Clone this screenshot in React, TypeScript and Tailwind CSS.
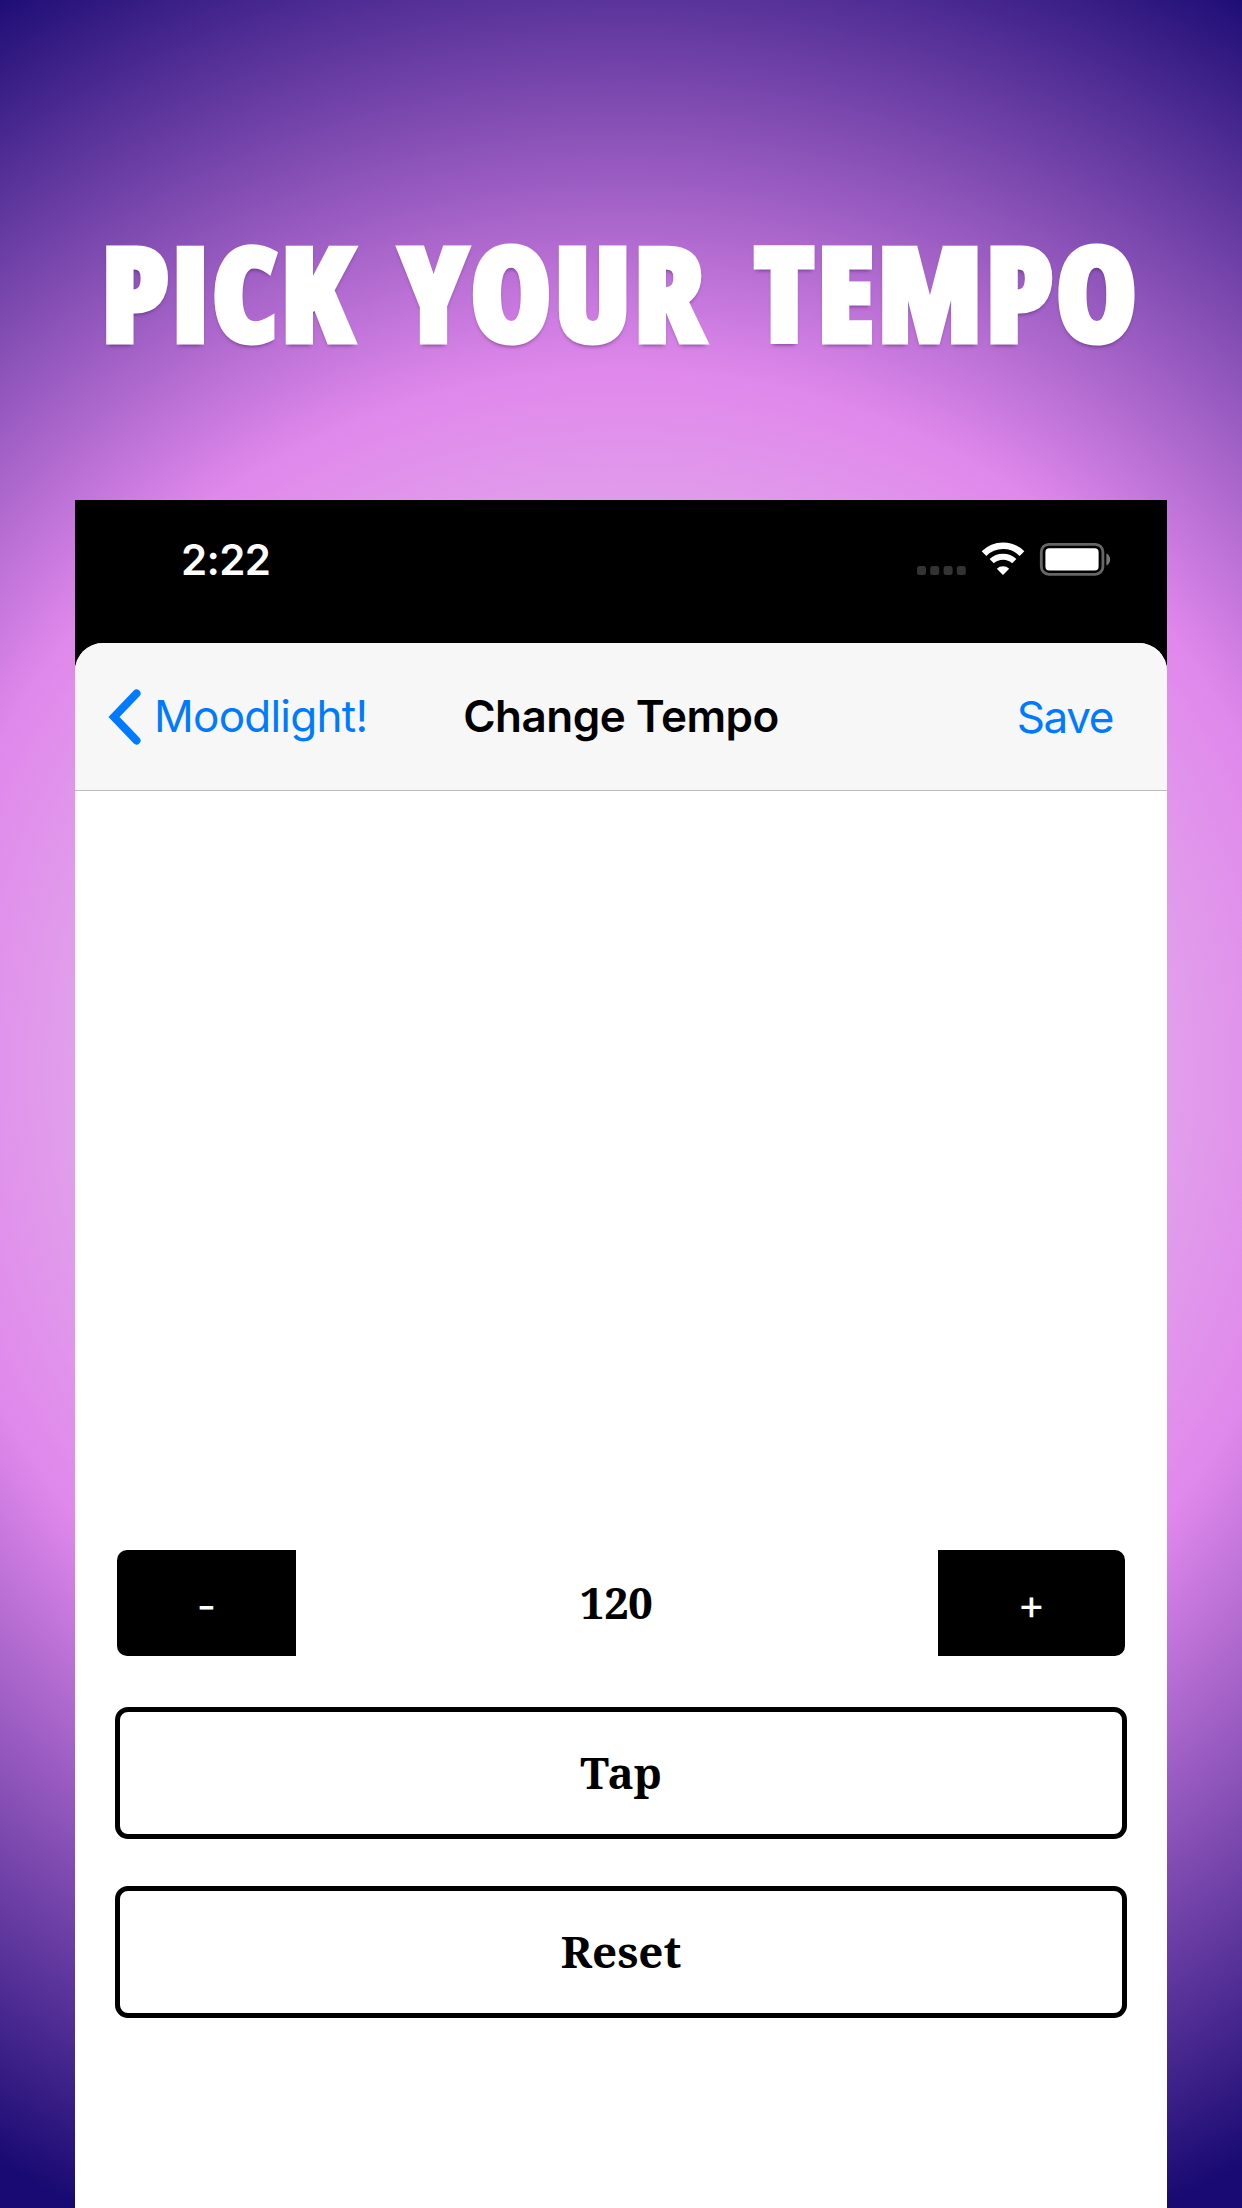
import React from "react";

const serif = "font-['Noto_Serif','Liberation_Serif',serif]";

function Headline() {
  return (
    <h1 className="grid h-[150px] grid-cols-[298px_355px_auto] whitespace-nowrap pl-[101px] font-['Open_Sans',sans-serif] text-[131px] font-extrabold leading-[150px] tracking-[2.4px] text-white [-webkit-text-stroke:5px_white] [font-stretch:75%] [text-shadow:0_3px_4px_rgba(40,0,60,0.6)]">
      <span>PICK</span>
      <span>YOUR</span>
      <span>TEMPO</span>
    </h1>
  );
}

function StatusIcons() {
  return (
    <svg className="mt-px h-[36px] w-[196px]" viewBox="0 0 196 36">
      <g fill="#333">
        <rect x="0" y="25" width="9" height="9" rx="2.5" />
        <rect x="13.2" y="25" width="9" height="9" rx="2.5" />
        <rect x="26.6" y="25" width="9" height="9" rx="2.5" />
        <rect x="39.8" y="25" width="9" height="9" rx="2.5" />
      </g>
      <g fill="none" stroke="#fff">
        <path d="M67 12.6a27 27 0 0 1 38 0" strokeWidth="6.6" />
        <path d="M74.7 20.2a16.3 16.3 0 0 1 22.6 0" strokeWidth="6" />
      </g>
      <path d="M86 34l-6.2-6.3a9 9 0 0 1 12.4 0z" fill="#fff" />
      <rect x="124.3" y="3.3" width="61.6" height="30" rx="7.5" fill="none" stroke="#666" strokeWidth="2.8" />
      <rect x="128.4" y="7.2" width="53.2" height="22.2" rx="4" fill="#fff" />
      <path d="M189.4 12.500v12c5-2.4 5-9.600 0-12z" fill="#777" />
    </svg>
  );
}

export default function App() {
  return (
    <main className="flex h-[2208px] w-[1242px] flex-col overflow-hidden bg-[radial-gradient(circle_1256px_at_621px_1073px,#dfb0e8_0%,#e1a0eb_43%,#e088ec_56%,#180a72_100%)] pt-[216px]">
      <Headline />
      <section className="mx-[75px] mt-[134px] flex flex-1 flex-col bg-black font-['Inter',sans-serif]">
        <div className="flex h-[143px] items-start justify-between pl-[106px] pr-[54px] pt-[40px]">
          <span className="text-[42px] font-semibold leading-[40px] tracking-[-0.7px] text-white">2:22</span>
          <StatusIcons />
        </div>
        <div className="flex flex-1 flex-col overflow-hidden rounded-t-[28px] bg-white">
          <header className="grid h-[148px] grid-cols-[1fr_auto_1fr] items-center border-b border-[#bcbcbe] bg-[#f7f7f8] px-[33px] text-[44px] text-[#007aff]">
            <div className="flex items-center">
              <svg className="h-[56px] w-[34px]" viewBox="0 0 34 56" fill="none" stroke="currentColor" strokeWidth="8" strokeLinecap="round" strokeLinejoin="miter">
                <path d="M28.500 4.500L6 28L28.500 51.500" />
              </svg>
              <span className="mb-[2px] ml-[12px] tracking-[-0.75px]">Moodlight!</span>
            </div>
            <h2 className="mb-[2px] font-semibold tracking-[-0.5px] text-black">Change Tempo</h2>
            <span className="mr-[21px] justify-self-end tracking-[-1.4px]">Save</span>
          </header>
          <div className="mt-[759px] flex h-[106px] items-stretch justify-between px-[42px]">
            <button className="w-[179px] rounded-l-[10px] bg-black pt-[4px] text-[42px] text-white">-</button>
            <span className={"mb-[3px] mr-[2px] self-center text-[44px] font-bold tracking-[-0.7px] text-black " + serif}>120</span>
            <button className="w-[187px] rounded-r-[10px] bg-black text-[42px] text-white">+</button>
          </div>
          <button className={"mx-[40px] mt-[51px] h-[132px] rounded-[13px] border-[5px] border-black pb-[2px] text-[44px] font-bold tracking-[-0.3px] " + serif}>Tap</button>
          <button className={"mx-[40px] mt-[47px] h-[132px] rounded-[13px] border-[5px] border-black pb-[2px] text-[44px] font-bold " + serif}>Reset</button>
        </div>
      </section>
    </main>
  );
}
